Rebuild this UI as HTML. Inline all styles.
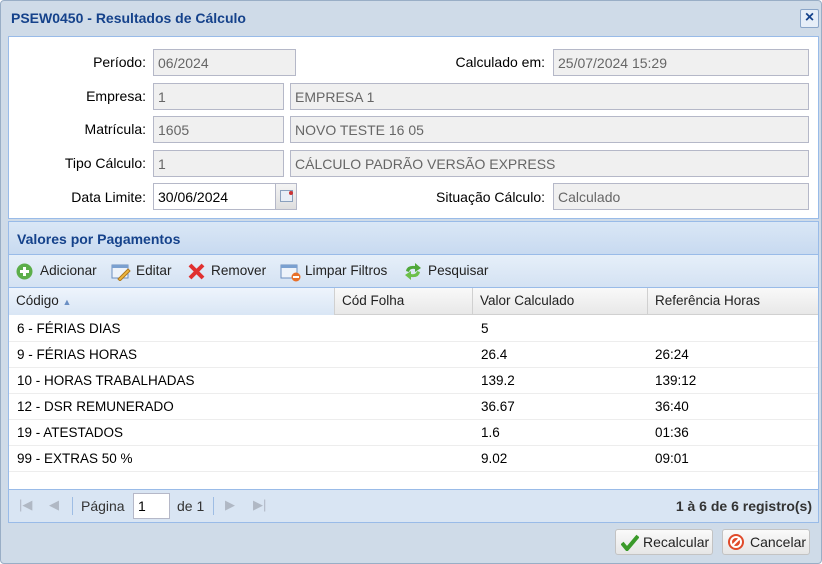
<!DOCTYPE html>
<html><head><meta charset="utf-8"><style>
*{box-sizing:border-box;margin:0;padding:0}
body{width:822px;height:564px;overflow:hidden;background:#fff;font-family:"Liberation Sans",sans-serif;font-size:14px;color:#000}
.win{position:absolute;left:0;top:0;width:822px;height:564px;background:#cfdbe8;border:1px solid #99aec6;border-radius:4px}
.title{position:absolute;left:10px;top:9px;font-weight:bold;color:#15428b;font-size:14px}
.close{position:absolute;left:799px;top:8px;width:19px;height:19px;border:1px solid #8aa5c8;border-radius:2px;background:#e6eef8;color:#15428b;font-size:16px;line-height:16px;text-align:center;font-weight:bold}
.form{position:absolute;left:7px;top:35px;width:811px;height:183px;background:#fff;border:1px solid #99bbe8}
.lbl{position:absolute;text-align:right;color:#000}
.in{position:absolute;height:27px;background:#f0f0f0;border:1px solid #b5b8c8;color:#666;padding:5px 4px;font-size:14px}
.grid{position:absolute;left:7px;top:220px;width:811px;height:302px;border:1px solid #99bbe8;background:#fff}
.gh{position:absolute;left:0;top:0;width:809px;height:33px;background:linear-gradient(#dae7f6,#c8daf0);border-bottom:1px solid #99bbe8;font-weight:bold;color:#15428b;padding:9px 8px}
.tb{position:absolute;left:0;top:33px;width:809px;height:33px;background:linear-gradient(#e6eff9,#d4e2f3);border-bottom:1px solid #99bbe8}
.tb span{position:absolute;top:8px;color:#222;font-size:13.6px}
.hd{position:absolute;left:0;top:66px;width:809px;height:27px;background:linear-gradient(#f9f9f9,#e8e8e8);border-bottom:1px solid #d0d0d0}
.hd div{position:absolute;top:0;height:27px;padding:5px 7px;border-right:1px solid #d0d0d0;color:#222;font-size:13.5px}
.row{position:absolute;left:0;width:809px;height:26px;border-bottom:1px solid #ededed}
.row div{position:absolute;top:5px;font-size:13.5px}
.pg{position:absolute;left:0;top:267px;width:809px;height:33px;background:#d9e5f3;border-top:1px solid #99bbe8}
.btn{position:absolute;top:528px;height:26px;border:1px solid #c3c3c3;border-radius:3px;background:linear-gradient(#fafafa,#e6e6e6);padding:4px 6px 0 27px;color:#222}
</style></head><body>
<div class="win">
<div class="title">PSEW0450 - Resultados de Cálculo</div>
<div class="close">×</div>
<div class="form">
<div class="lbl" style="left:0;width:137px;top:17px">Período:</div>
<div class="in" style="left:144px;top:12px;width:143px">06/2024</div>
<div class="lbl" style="left:380px;width:156px;top:17px">Calculado em:</div>
<div class="in" style="left:544px;top:12px;width:256px">25/07/2024 15:29</div>
<div class="lbl" style="left:0;width:137px;top:51px">Empresa:</div>
<div class="in" style="left:144px;top:46px;width:131px">1</div>
<div class="in" style="left:281px;top:46px;width:519px">EMPRESA 1</div>
<div class="lbl" style="left:0;width:137px;top:84px">Matrícula:</div>
<div class="in" style="left:144px;top:79px;width:131px">1605</div>
<div class="in" style="left:281px;top:79px;width:519px">NOVO TESTE 16 05</div>
<div class="lbl" style="left:0;width:137px;top:118px">Tipo Cálculo:</div>
<div class="in" style="left:144px;top:113px;width:131px">1</div>
<div class="in" style="left:281px;top:113px;width:519px">CÁLCULO PADRÃO VERSÃO EXPRESS</div>
<div class="lbl" style="left:0;width:137px;top:152px">Data Limite:</div>
<div class="in" style="left:144px;top:146px;width:123px;background:#fff;color:#000">30/06/2024</div>
<div style="position:absolute;left:266px;top:146px;width:22px;height:27px;border:1px solid #b5b8c8;background:linear-gradient(#f4f4f4,#dedede)"><div style="position:absolute;left:4px;top:6px;width:13px;height:12px;border:1px solid #8aa0bd;background:#e8eef6"></div><div style="position:absolute;left:13px;top:7px;width:4px;height:4px;background:#c33;border-radius:2px"></div></div>
<div class="lbl" style="left:380px;width:156px;top:152px">Situação Cálculo:</div>
<div class="in" style="left:544px;top:146px;width:256px">Calculado</div>
</div>
<div class="grid">
<div class="gh">Valores por Pagamentos</div>
<div class="tb">
<svg style="position:absolute;left:7px;top:8px" width="17" height="17"><circle cx="8.5" cy="8.5" r="8" fill="#5cae4a"/><rect x="4" y="7" width="9" height="3" fill="#fff"/><rect x="7" y="4" width="3" height="9" fill="#fff"/></svg><span style="left:31px">Adicionar</span>
<svg style="position:absolute;left:102px;top:8px" width="20" height="18"><rect x="1" y="2" width="16" height="13" fill="#eef3fa" stroke="#6d8fbf"/><rect x="1" y="2" width="16" height="3" fill="#7aa0d0"/><path d="M7 16 L17 6 L19 8 L9 18 Z" fill="#f0b840" stroke="#b07a20"/></svg><span style="left:127px">Editar</span>
<svg style="position:absolute;left:179px;top:8px" width="17" height="17"><path d="M2 2 L15 15 M15 2 L2 15" stroke="#e03030" stroke-width="4"/></svg><span style="left:202px">Remover</span>
<svg style="position:absolute;left:271px;top:8px" width="22" height="19"><rect x="1" y="2" width="16" height="13" fill="#eef3fa" stroke="#6d8fbf"/><rect x="1" y="2" width="16" height="3" fill="#7aa0d0"/><circle cx="16" cy="14" r="4.5" fill="#e8702a"/><rect x="13" y="13" width="6" height="2" fill="#fff"/></svg><span style="left:296px">Limpar Filtros</span>
<svg style="position:absolute;left:394px;top:8px" width="20" height="17"><path d="M3 8 Q4 2 12 3 L12 0 L18 5 L12 9 L12 6 Q7 5 6 9 Z" fill="#4fa83a"/><path d="M17 9 Q16 15 8 14 L8 17 L2 12 L8 8 L8 11 Q13 12 14 8 Z" fill="#6cc04a"/></svg><span style="left:419px">Pesquisar</span>
</div>
<div class="hd">
<div style="left:0;width:326px;background:linear-gradient(#eef4fc,#d9e6f5)">Código <span style="color:#6a8fc4;font-size:9px">▲</span></div>
<div style="left:326px;width:138px">Cód Folha</div>
<div style="left:464px;width:175px">Valor Calculado</div>
<div style="left:639px;width:170px;border-right:none">Referência Horas</div>
</div>
<div class="row" style="top:94px"><div style="left:8px">6 - FÉRIAS DIAS</div><div style="left:472px">5</div></div>
<div class="row" style="top:120px"><div style="left:8px">9 - FÉRIAS HORAS</div><div style="left:472px">26.4</div><div style="left:646px">26:24</div></div>
<div class="row" style="top:146px"><div style="left:8px">10 - HORAS TRABALHADAS</div><div style="left:472px">139.2</div><div style="left:646px">139:12</div></div>
<div class="row" style="top:172px"><div style="left:8px">12 - DSR REMUNERADO</div><div style="left:472px">36.67</div><div style="left:646px">36:40</div></div>
<div class="row" style="top:198px"><div style="left:8px">19 - ATESTADOS</div><div style="left:472px">1.6</div><div style="left:646px">01:36</div></div>
<div class="row" style="top:224px"><div style="left:8px">99 - EXTRAS 50 %</div><div style="left:472px">9.02</div><div style="left:646px">09:01</div></div>
<div class="pg">
<span style="position:absolute;left:10px;top:7px;color:#b0b8c4;font-size:13px">|◀</span>
<span style="position:absolute;left:40px;top:7px;color:#b0b8c4;font-size:13px">◀</span>
<div style="position:absolute;left:63px;top:7px;width:1px;height:18px;background:#9ebde4"></div>
<span style="position:absolute;left:72px;top:8px;color:#333">Página</span>
<div style="position:absolute;left:124px;top:3px;width:37px;height:26px;border:1px solid #b5b8c8;background:#fff;padding:4px 4px">1</div>
<span style="position:absolute;left:168px;top:8px;color:#333">de 1</span>
<div style="position:absolute;left:204px;top:7px;width:1px;height:18px;background:#9ebde4"></div>
<span style="position:absolute;left:216px;top:7px;color:#b0b8c4;font-size:13px">▶</span>
<span style="position:absolute;left:244px;top:7px;color:#b0b8c4;font-size:13px">▶|</span>
<span style="position:absolute;right:6px;top:8px;font-weight:bold;color:#333">1 à 6 de 6 registro(s)</span>
</div>
</div>
<div class="btn" style="left:614px;width:98px"><svg style="position:absolute;left:5px;top:4px" width="18" height="17"><path d="M1 9 L6 15 L17 2" stroke="#3a9a2a" stroke-width="4" fill="none"/></svg>Recalcular</div>
<div class="btn" style="left:721px;width:88px"><svg style="position:absolute;left:4px;top:3px" width="18" height="18"><circle cx="9" cy="9" r="8" fill="#e04a2a"/><circle cx="9" cy="9" r="5" fill="none" stroke="#fff" stroke-width="2"/><path d="M5 13 L13 5" stroke="#fff" stroke-width="2"/></svg>Cancelar</div>
</div>
</body></html>
